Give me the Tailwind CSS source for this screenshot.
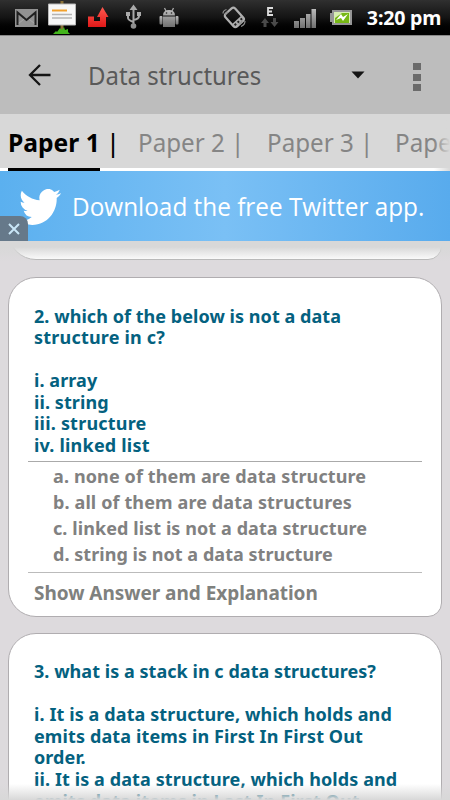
<!DOCTYPE html>
<html lang="en">
<head>
<meta charset="utf-8">
<title>Data structures</title>
<script src="https://cdn.jsdelivr.net/npm/@tailwindcss/browser@4"></script>
</head>
<body class="w-[450px] h-[800px] overflow-hidden bg-[#dddadd] font-['Noto_Sans','Open_Sans',sans-serif]">
<div class="flex flex-col w-[450px] h-[800px] overflow-hidden">
  <header class="flex h-9 shrink-0 border-b border-[#888] bg-linear-to-b from-[#303030] via-[#141414] to-black">
    <svg class="shrink-0" width="360" height="35" viewBox="0 0 360 35">
      <defs>
        <linearGradient id="metal" x1="0" y1="0" x2="0" y2="1"><stop stop-color="#bbb"/><stop offset="1" stop-color="#707070"/></linearGradient>
        <linearGradient id="red" x1="0" y1="0" x2="0" y2="1"><stop stop-color="#ff5a50"/><stop offset="1" stop-color="#e01818"/></linearGradient>
      </defs>
      <path d="M15 9h23v18H15z" fill="#929292"/>
      <path d="M18 24l6-5M35 24l-6-5" fill="none" stroke="#aaa" stroke-width="1"/>
      <path d="M17.500 25V12.500l9 7.500 9-7.500V25" fill="none" stroke="#202020" stroke-width="2"/>
      <path d="M60.500 1h3v32h-3z" fill="#8a7136"/>
      <path d="M53 34l3-3 1 1 3-4 2 2 2-3 1 3 3-1v3l2 2z" fill="#43b51c"/>
      <path d="M48.500 4h27v21h-27z" fill="#f7f7f7" stroke="#b9b9b9"/>
      <path d="M52 10.500h15" stroke="#f2a12d" stroke-width="2"/><path d="M52 14.500h20M52 18h20" stroke="#b5b5b5" stroke-width="1.500"/>
      <path d="M88 16.500h6v4.500h6v-4h-3l5.500-10 6 10H106v10H88z" fill="url(#red)"/>
      <g stroke="#a8a8a8" stroke-width="2" fill="none"><path d="M133.500 8v18M128 14v4q0 2 5.500 4M139 13v3q0 3-5.500 4"/></g>
      <path d="M133.500 4.500l4 5.500h-8zM126 12h4v4h-4zM137 12h4v4h-4z" fill="#aaa"/><circle cx="133.500" cy="26" r="2.800" fill="#909090"/>
      <g fill="url(#metal)"><path d="M163 15.500q0-5.500 6-5.500t6 5.500zM163 16.500h12V27h-12z"/><rect x="159.500" y="16" width="3" height="8.500" rx="1"/><rect x="175.500" y="16" width="3" height="8.500" rx="1"/></g>
      <path d="M164.500 8l1.500 3M173.500 8l-1.500 3" stroke="#aaa" stroke-width="1.300"/><circle cx="166.500" cy="13" r=".8" fill="#222"/><circle cx="171.500" cy="13" r=".8" fill="#222"/>
      <g transform="rotate(-42 234 17)"><rect x="227.500" y="9" width="13" height="17" rx="2.500" fill="none" stroke="#b0b0b0" stroke-width="2.200"/><path d="M227.500 23.500h13" stroke="#aaa" stroke-width="5"/><path d="M229 23.500h11" stroke="#222" stroke-width="2" stroke-dasharray="2 2"/></g>
      <path d="M223 13.500q0-3 3.500-4M225.500 15q0-2.500 2.500-3M242 20q0 3-3 4M245 21q0 4-4 5.500" fill="none" stroke="#909090" stroke-width="1.200"/>
      <path d="M273 8h-5v7h5M268 11.500h4" fill="none" stroke="#ddd" stroke-width="1.800"/>
      <path d="M265 18l4 5h-2.500v4h-3v-4H261zM274.500 27l4-5H276v-4h-3v4h-2.500z" fill="#4a4a4a"/>
      <g fill="url(#metal)"><path d="M294 21h5v7h-5zM300 18h5v10h-5zM306 14h4.500v14H306zM311.500 9h4.500v19h-4.500z"/></g>
      <path d="M332 10h20v15h-20v-3h-2v-9h2z" fill="#969696"/><path d="M334 12h16v11h-16z" fill="#d7edb2"/><path d="M335 23v-5l7-5h7v10z" fill="#76b814"/><path d="M336 20l5-6 2 3 5-3-5 7-2-3z" fill="#fff"/>
    </svg>
    <div class="w-[90px] origin-left scale-x-[.98] pl-[7px] text-[20px] leading-[36px] font-bold whitespace-nowrap text-white tracking-[-0.2px]">3:20 pm</div>
  </header>

  <nav class="flex h-[78px] shrink-0 items-center bg-[#bdbdbd]">
    <svg class="ml-7 shrink-0" width="24" height="24" viewBox="0 0 24 24" fill="none" stroke="#151515" stroke-width="2.300"><path d="M22.500 12H2M12 2L2 12l10 10"/></svg>
    <div class="-mt-px ml-[35.500px] w-[263.500px] whitespace-nowrap text-[25.500px] leading-8 text-[#595959]"><span class="inline-block origin-left scale-x-[.938]">Data structures</span></div>
    <svg class="shrink-0" width="14" height="8" viewBox="0 0 14 8"><path d="M.5.500h13L7 7.500z" fill="#151515"/></svg>
    <div class="ml-[48px] mt-1 flex flex-col gap-[3.500px]"><i class="h-[7px] w-2 bg-[#6b6b6b]"></i><i class="h-[7px] w-2 bg-[#6b6b6b]"></i><i class="h-[7px] w-2 bg-[#6b6b6b]"></i></div>
  </nav>

  <div class="relative h-[57px] shrink-0 bg-[#d8d8d8]">
    <div class="flex h-[57px] overflow-hidden border-b-[3px] border-white pl-2 pt-3 text-[25.500px] leading-8 whitespace-nowrap text-[#858585]">
      <div class="w-[130px] shrink-0 font-bold text-black"><span class="inline-block origin-left scale-x-[.965]">Paper 1 <span class="font-medium">|</span></span></div>
      <div class="w-[128.500px] shrink-0"><span class="inline-block origin-left scale-x-[.948]">Paper 2 |</span></div>
      <div class="w-[128.500px] shrink-0"><span class="inline-block origin-left scale-x-[.948]">Paper 3 |</span></div>
      <div class="w-[128px] shrink-0"><span class="inline-block origin-left scale-x-[.948]">Paper 4 |</span></div>
    </div>
    <div class="absolute right-0 top-0 h-[57px] w-4 bg-linear-to-r from-[#d8d8d8]/0 to-[#d8d8d8]"></div>
    <div class="absolute left-2 bottom-0 h-[3px] w-[92px] bg-black"></div>
  </div>

  <div class="relative flex h-[70px] shrink-0 items-center bg-linear-to-r from-[#5bb0ef] via-[#7ac0f5] to-[#58abed]">
    <svg class="ml-[19px] mt-px shrink-0" width="42" height="36" viewBox="0 2.200 24 19.600" preserveAspectRatio="none" fill="#fff"><path d="M23.950 4.570a10 10 0 0 1-2.820.77 4.960 4.960 0 0 0 2.160-2.720c-.95.550-2 .95-3.130 1.180a4.920 4.920 0 0 0-8.380 4.480C7.690 8.100 4.070 6.130 1.640 3.160a4.820 4.820 0 0 0-.67 2.480c0 1.710.87 3.210 2.190 4.090a4.900 4.900 0 0 1-2.230-.61v.06a4.920 4.920 0 0 0 3.950 4.830 5 5 0 0 1-2.210.08 4.940 4.940 0 0 0 4.600 3.420A9.870 9.870 0 0 1 0 19.540a13.990 13.990 0 0 0 7.550 2.210c9.050 0 14-7.500 14-13.980 0-.21 0-.42-.02-.63a9.940 9.940 0 0 0 2.460-2.550z"/></svg>
    <div class="ml-[10.500px] whitespace-nowrap font-['Open_Sans','Noto_Sans',sans-serif] text-[26px] leading-8 font-medium text-white"><span class="inline-block w-[356px] origin-left scale-x-[.936]">Download the free Twitter app.</span></div>
    <div class="absolute bottom-0 left-0 flex h-[25px] w-7 items-center justify-center rounded-tr-lg bg-[#66798a]"><svg width="12" height="12" viewBox="0 0 12 12" stroke="#c9e6f7" stroke-width="2"><path d="M1 1l10 10M11 1L1 11"/></svg></div>
  </div>

  <main class="relative flex h-[559px] flex-col overflow-hidden px-2 text-[18px] leading-[21.600px] font-bold tracking-[0.08px] text-[#04617f]">
    <section class="-mt-10 h-[59px] shrink-0 rounded-bl-[28px] rounded-br-[14px] border border-[#b5b5b5] bg-white"></section>
    <section class="mt-[17px] h-[339.500px] shrink-0 rounded-[28px] rounded-br-[14px] border border-[#b0adb0] bg-white px-[19px] pt-[27.500px]">
      <div class="h-[156.500px] border-b border-[#aaa] whitespace-nowrap">
        <p class="pl-[6px]"><span class="tracking-[0.05px]">2. which of the below is not a data</span><br><span class="tracking-[0.2px]">structure in c?</span><br><br><span>i. array</span><br><span>ii. string</span><br><span class="tracking-[0.2px]">iii. structure</span><br><span class="tracking-[0.2px]">iv. linked list</span></p>
      </div>
      <div class="h-[111px] border-b border-[#bbb] pl-[25px] pt-[1px] leading-[26px] whitespace-nowrap text-[#818181]">
        <p><span class="tracking-[0.12px]">a. none of them are data structure</span></p>
        <p><span class="tracking-[0.12px]">b. all of them are data structures</span></p>
        <p><span>c. linked list is not a data structure</span></p>
        <p><span class="tracking-[0.04px]">d. string is not a data structure</span></p>
      </div>
      <p class="pl-[6px] pt-[7px] text-[19px] leading-[26px] whitespace-nowrap tracking-[-0.04px] text-[#7f817e]"><span>Show Answer and Explanation</span></p>
    </section>
    <section class="mt-[16.500px] h-[300px] shrink-0 rounded-[28px] border border-[#b0adb0] bg-white px-[25px] pt-[27px] whitespace-nowrap">
      <p><span class="tracking-[0.04px]">3. what is a stack in c data structures?</span><br><br><span class="tracking-[0.1px]">i. It is a data structure, which holds and</span><br><span class="tracking-[0.12px]">emits data items in First In First Out</span><br><span>order.</span><br><span class="tracking-[0.1px]">ii. It is a data structure, which holds and</span><br><span class="tracking-[0.1px]">emits data items in Last In First Out</span></p>
    </section>
    <div class="absolute inset-x-0 top-0 h-5 bg-linear-to-b from-[#d8d8d8] from-30% to-[#d8d8d8]/0"></div>
    <div class="absolute inset-x-0 bottom-0 h-4 bg-linear-to-t from-[#d8d8d8] to-[#d8d8d8]/0"></div>
  </main>
</div>
</body>
</html>
